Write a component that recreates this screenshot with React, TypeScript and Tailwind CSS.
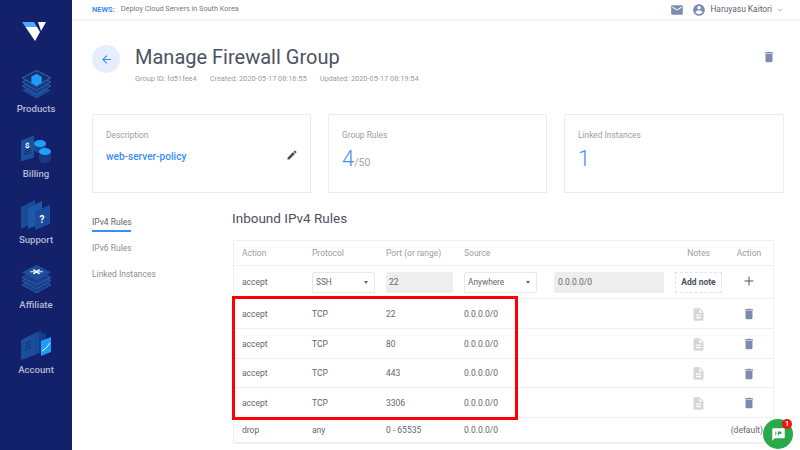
import React from "react";

const Trash = ({ className = "" }: { className?: string }) => (
  <svg viewBox="0 0 24 24" className={className} fill="#7c8bb0">
    <path d="M6 19c0 1.1.9 2 2 2h8c1.1 0 2-.9 2-2V7H6v12zM19 4h-3.5l-1-1h-5l-1 1H5v2h14V4z" />
  </svg>
);
const Note = () => (
  <svg viewBox="0 0 24 24" className="w-[15px] h-[15px]" fill="#d5d6d9">
    <path d="M14 2H6c-1.1 0-2 .9-2 2v16c0 1.1.9 2 2 2h12c1.1 0 2-.9 2-2V8l-6-6zm2 16H8v-2h8v2zm0-4H8v-2h8v2zm-3-5V3.500L18.500 9H13z" />
  </svg>
);

const Cell = ({ w, children, className = "" }: { w: string; children?: React.ReactNode; className?: string }) => (
  <div className={`${w} shrink-0 ${className}`}>{children}</div>
);

const Products = () => (
  <svg viewBox="2 2 28 27" className="w-[29px] h-[29px]">
    <path d="M16 15 L30 21 L16 29 L2 21Z" fill="#1c4a94" />
    <path d="M16 11 L30 17 L16 25 L2 17Z" fill="#1a3f88" stroke="#2a64b8" strokeWidth=".8" />
    <path d="M16 7 L30 13 L16 21 L2 13Z" fill="#173a80" stroke="#2a64b8" strokeWidth=".8" />
    <path d="M16 2 L30 9 L16 17 L2 9Z" fill="#16306f" stroke="#2a64b8" strokeWidth="1" />
    <path d="M16 5 L21 8 V14 L16 17 L11 14 V8Z" fill="#1e9bfb" />
  </svg>
);
const Billing = () => (
  <svg viewBox="1 3 30 28" className="w-[30px] h-[29px]">
    <path d="M1 8 L14 3 V25 L1 29Z" fill="#1d4f9f" />
    <text x="5" y="15" fill="#fff" fontSize="8" fontWeight="700" fontFamily="Roboto">$</text>
    <path d="M4 18 L11 16 M4 20 L11 18 M4 22 L11 20" stroke="#13306f" strokeWidth="1" />
    <path d="M14 11 V17 A6 3.500 0 0 0 26 17 V11Z" fill="#174a96" />
    <ellipse cx="20" cy="11" rx="6" ry="3.500" fill="#1ea0fb" />
    <path d="M19 19 V27 A6 3.500 0 0 0 31 27 V19Z" fill="#173c85" />
    <ellipse cx="25" cy="19" rx="6" ry="3.500" fill="#1ea0fb" />
  </svg>
);
const Support = () => (
  <svg viewBox="1 2 30 30" className="w-[30px] h-[30px]">
    <path d="M1 9 L15 2 V24 L1 31Z" fill="#1c4a94" />
    <path d="M8 10 L22 3 V25 L8 31Z" fill="#1d58ab" />
    <path d="M15 13 L30 7 V26 L15 32Z" fill="#1a4c9c" />
    <text x="19.500" y="25" fill="#fff" fontSize="10" fontWeight="700" fontFamily="Roboto">?</text>
  </svg>
);
const Affiliate = () => (
  <svg viewBox="2 2 28 27" className="w-[29px] h-[28px] mb-[2px]">
    <path d="M16 14 L30 21 L16 29 L2 21Z" fill="#1a3f88" stroke="#2a64b8" strokeWidth=".8" />
    <path d="M16 10 L30 17 L16 25 L2 17Z" fill="#1a3f88" stroke="#2a64b8" strokeWidth=".8" />
    <path d="M16 7 L30 14 L16 21 L2 14Z" fill="#1a3f88" stroke="#2a64b8" strokeWidth=".8" />
    <path d="M16 2 L30 9 L16 17 L2 9Z" fill="#1d4f9f" />
    <path d="M13 6.500 L19 10.500 M19 6.500 L13 10.500" stroke="#fff" strokeWidth="1.500" />
    <path d="M10 8.500 H14 M18 8.500 H22" stroke="#fff" strokeWidth="1.200" />
  </svg>
);
const Account = () => (
  <svg viewBox="1 1 30 29" className="w-[30px] h-[29px]">
    <path d="M1 10 L15 3 V25 L1 30Z" fill="#1c4d9c" />
    <path d="M5 14 L11 11 M5 17 L11 14 M5 20 L11 17" stroke="#13306f" strokeWidth="1" />
    <path d="M15 3 L21 1 L21 22 L15 25Z" fill="#174a96" />
    <path d="M19 3 L26 4 V20 L19 22Z" fill="#163f88" />
    <path d="M21 11 L31 7 V22 L21 26Z" fill="#1e9bfb" />
    <path d="M22 21 L25 19 L27 17 L30 13" stroke="#fff" strokeWidth=".9" fill="none" />
  </svg>
);

const navItems: [string, React.ReactNode, string][] = [
  ["Products", <Products />, "h-[65px]"],
  ["Billing", <Billing />, "h-[66px]"],
  ["Support", <Support />, "h-[65px]"],
  ["Affiliate", <Affiliate />, "h-[65px]"],
  ["Account", <Account />, "h-[65px]"],
];

const rows = [
  ["22", "h-[30px]"],
  ["80", "h-[30px]"],
  ["443", "h-[29px]"],
  ["3306", "h-[30px]"],
];

const StatCard = ({ title, children, className = "" }: { title: string; children: React.ReactNode; className?: string }) => (
  <div className={`h-[79px] border border-[#ececee] px-[13px] pt-[13px] ${className}`}>
    <div className="text-[8.400px] leading-[14px] text-[#9a9da6]">{title}</div>
    {children}
  </div>
);

const Select = ({ label, w }: { label: string; w: string }) => (
  <div className={`${w} h-[21px] border border-[#e8e8ea] rounded-[2px] flex items-center justify-between pl-[3px] pr-[6px] text-[8.300px] text-[#62666f] bg-white`}>
    <span>{label}</span>
    <span className="w-0 h-0 border-x-[2.500px] border-x-transparent border-t-[3px] border-t-[#666]" />
  </div>
);

export default function App() {
  return (
    <div className="w-[800px] h-[450px] overflow-hidden flex bg-white text-[#62666f]" style={{ fontFamily: "Roboto, 'Liberation Sans', sans-serif" }}>
      <aside className="w-[72px] shrink-0 h-full bg-[#13216a] flex flex-col items-center">
        <div className="h-[62px] flex items-center pr-[4px]">
          <svg viewBox="0 0 24 20" className="w-[24px] h-[20px]">
            <path d="M0 1 H12 L15 6 H3.500Z" fill="#51a6ff" />
            <path d="M3.500 6 H15 L18 11 L13 20 Z" fill="#fff" />
            <path d="M16 1 H24 L19 10Z" fill="#fff" />
          </svg>
        </div>
        {navItems.map(([label, icon, h]) => (
          <div key={label} className={`${h} w-full flex flex-col items-center`}>
            <div className="h-[37px] flex items-end">{icon}</div>
            <div className="mt-[3px] text-[9.600px] leading-[14px] font-medium text-[#b4bad4]">{label}</div>
          </div>
        ))}
      </aside>

      <main className="flex-1 min-w-0 flex flex-col">
        <header className="h-[21px] shrink-0 border-b-2 border-[#f5f5f6] flex items-center pl-[20px] pr-[17px]">
          <span className="text-[7.500px] font-bold text-[#3d8dfa]">NEWS:</span>
          <span className="ml-[6px] text-[7.300px] text-[#757985]">Deploy Cloud Servers in South Korea</span>
          <div className="ml-auto flex items-center">
            <svg viewBox="0 0 24 24" className="w-[14px] h-[14px]" fill="#7c8bb0">
              <path d="M20 4H4c-1.100 0-2 .9-2 2v12c0 1.100.9 2 2 2h16c1.100 0 2-.9 2-2V6c0-1.100-.9-2-2-2zm0 4-8 5-8-5V6l8 5 8-5v2z" />
            </svg>
            <svg viewBox="0 0 24 24" className="ml-[8px] w-[14px] h-[14px]" fill="#7c8bb0">
              <path d="M12 2C6.480 2 2 6.480 2 12s4.480 10 10 10 10-4.480 10-10S17.520 2 12 2zm0 3c1.660 0 3 1.340 3 3s-1.340 3-3 3-3-1.340-3-3 1.340-3 3-3zm0 14.200c-2.500 0-4.710-1.280-6-3.220.03-1.990 4-3.080 6-3.080 1.990 0 5.970 1.090 6 3.080-1.290 1.940-3.500 3.220-6 3.220z" />
            </svg>
            <span className="ml-[4px] text-[8.400px] text-[#5d6475]">Haruyasu Kaitori</span>
            <svg viewBox="0 0 8 5" className="ml-[5px] w-[6px] h-[4px]" fill="none" stroke="#9aa0ae" strokeWidth="1"><path d="M1 1 L4 4 L7 1" /></svg>
          </div>
        </header>

        <div className="h-[93px] shrink-0 flex pl-[20px] pr-[24px] pt-[24px]">
          <div className="w-[28px] h-[28px] rounded-full bg-[#e7eefb] flex items-center justify-center">
            <svg viewBox="0 0 24 24" className="w-[13px] h-[13px]" fill="#2f8cff">
              <path d="M20 11H7.830l5.590-5.590L12 4l-8 8 8 8 1.410-1.410L7.830 13H20v-2z" />
            </svg>
          </div>
          <div className="ml-[15px] -mt-[2px]">
            <div className="text-[20px] leading-[29px] text-[#4d5263]">Manage Firewall Group</div>
            <div className="flex text-[7.400px] leading-[11px] text-[#9a9da6] mt-[1px]">
              <span>Group ID: fd51fee4</span>
              <span className="ml-[13px]">Created: 2020-05-17 08:16:55</span>
              <span className="ml-[13px]">Updated: 2020-05-17 08:19:54</span>
            </div>
          </div>
          <Trash className="ml-auto mt-[5px] w-[14px] h-[14px]" />
        </div>

        <div className="flex gap-[17px] pl-[20px] shrink-0">
          <StatCard title="Description" className="w-[219px] relative">
            <div className="mt-[8px] text-[10.100px] leading-[14px] font-medium text-[#3a8cfb]">web-server-policy</div>
            <svg viewBox="0 0 24 24" className="absolute right-[12px] top-[34px] w-[12px] h-[12px]" fill="#4d4d52">
              <path d="M3 17.250V21h3.750L17.810 9.940l-3.750-3.750L3 17.250zM20.710 7.040a1 1 0 0 0 0-1.410l-2.340-2.340a1 1 0 0 0-1.410 0l-1.830 1.830 3.750 3.750 1.830-1.830z" />
            </svg>
          </StatCard>
          <StatCard title="Group Rules" className="w-[219px]">
            <div className="flex items-baseline mt-[5px] text-[#4a90f0]">
              <span className="text-[22px] leading-[24px] font-light">4</span>
              <span className="text-[10.500px] text-[#a3a6ae]">/50</span>
            </div>
          </StatCard>
          <StatCard title="Linked Instances" className="w-[220px]">
            <div className="mt-[5px] text-[22px] leading-[24px] font-light text-[#4a90f0]">1</div>
          </StatCard>
        </div>

        <div className="flex pl-[20px] mt-[17px]">
          <nav className="w-[141px] shrink-0 pt-[5px] text-[8.500px] text-[#8b8e97]">
            <div className="w-[39px] h-[17px] border-b-2 border-[#3a8cfb] text-[#5f6470] leading-[14px] whitespace-nowrap">IPv4 Rules</div>
            <div className="mt-[9px] leading-[14px]">IPv6 Rules</div>
            <div className="mt-[12px] leading-[14px]">Linked Instances</div>
          </nav>
          <section className="w-[541px] shrink-0">
            <h2 className="-ml-[1px] text-[13.500px] leading-[16px] text-[#4d5263]">Inbound IPv4 Rules</h2>
            <div className="relative mt-[14px] border-x border-t border-b-2 border-[#f0f0f2] text-[8.500px]">
              <div className="h-[25px] flex items-center pl-[8px] text-[#9a9da6] border-b border-[#f0f0f2]">
                <Cell w="w-[70px]">Action</Cell>
                <Cell w="w-[74px]">Protocol</Cell>
                <Cell w="w-[78px]">Port (or range)</Cell>
                <Cell w="w-[211px]">Source</Cell>
                <Cell w="w-[47px]" className="text-center">Notes</Cell>
                <Cell w="w-[51px]" className="pl-[3px] text-center">Action</Cell>
              </div>
              <div className="h-[33px] flex items-center pl-[8px] border-b border-[#f0f0f2]">
                <Cell w="w-[70px]">accept</Cell>
                <Cell w="w-[74px]"><Select label="SSH" w="w-[63px]" /></Cell>
                <Cell w="w-[78px]">
                  <div className="w-[67px] h-[21px] bg-[#eeeeee] rounded-[2px] flex items-center pl-[3px]">22</div>
                </Cell>
                <Cell w="w-[90px]"><Select label="Anywhere" w="w-[73px]" /></Cell>
                <Cell w="w-[121px]">
                  <div className="w-[110px] h-[21px] bg-[#eeeeee] rounded-[2px] flex items-center pl-[4px]">0.0.0.0/0</div>
                </Cell>
                <Cell w="w-[47px]">
                  <div className="w-[47px] h-[21px] border border-dashed border-[#e4e4e6] flex items-center justify-center font-bold text-[#4d5263] whitespace-nowrap">Add note</div>
                </Cell>
                <Cell w="w-[51px]" className="pl-[3px] flex justify-center">
                  <svg viewBox="0 0 24 24" className="w-[12px] h-[12px] mt-[-2px]" fill="none" stroke="#55565c" strokeWidth="2"><path d="M12 3 V21 M3 12 H21" /></svg>
                </Cell>
              </div>
              {rows.map(([port, h]) => (
                <div key={port} className={`${h} flex items-center pl-[8px] pt-[1px] border-b border-[#f0f0f2]`}>
                  <Cell w="w-[70px]">accept</Cell>
                  <Cell w="w-[74px]">TCP</Cell>
                  <Cell w="w-[78px]">{port}</Cell>
                  <Cell w="w-[211px]">0.0.0.0/0</Cell>
                  <Cell w="w-[47px]" className="flex justify-center"><Note /></Cell>
                  <Cell w="w-[51px]" className="pl-[3px] flex justify-center"><Trash className="w-[14px] h-[14px]" /></Cell>
                </div>
              ))}
              <div className="h-[24px] flex items-center pl-[8px]">
                <Cell w="w-[70px]">drop</Cell>
                <Cell w="w-[74px]">any</Cell>
                <Cell w="w-[78px]">0 - 65535</Cell>
                <Cell w="w-[203px]">0.0.0.0/0</Cell>
                <Cell w="w-[96px]" className="text-right">(default)</Cell>
              </div>
              <div className="absolute left-[-2px] top-[55px] w-[286px] h-[124px] border-[3px] border-[#fb0007]" />
            </div>
          </section>
        </div>
      </main>

      <div className="absolute left-[763px] top-[419px] w-[30px] h-[30px] rounded-full bg-[#2ba84a] flex items-center justify-center">
        <svg viewBox="0 0 24 24" className="w-[15px] h-[15px]" fill="#fff">
          <path d="M20 2H4c-1.100 0-2 .9-2 2v18l4-4h14c1.100 0 2-.9 2-2V4c0-1.100-.9-2-2-2z" />
          <path d="M7 7h1.500v6H7zM11 7h4a2 2 0 0 1 0 4h-2.500v2H11z" fill="#2ba84a" />
        </svg>
        <div className="absolute right-[1px] top-0 w-[10px] h-[10px] rounded-full bg-[#f01414] text-white text-[6.500px] font-bold leading-[10px] text-center">1</div>
      </div>
    </div>
  );
}
